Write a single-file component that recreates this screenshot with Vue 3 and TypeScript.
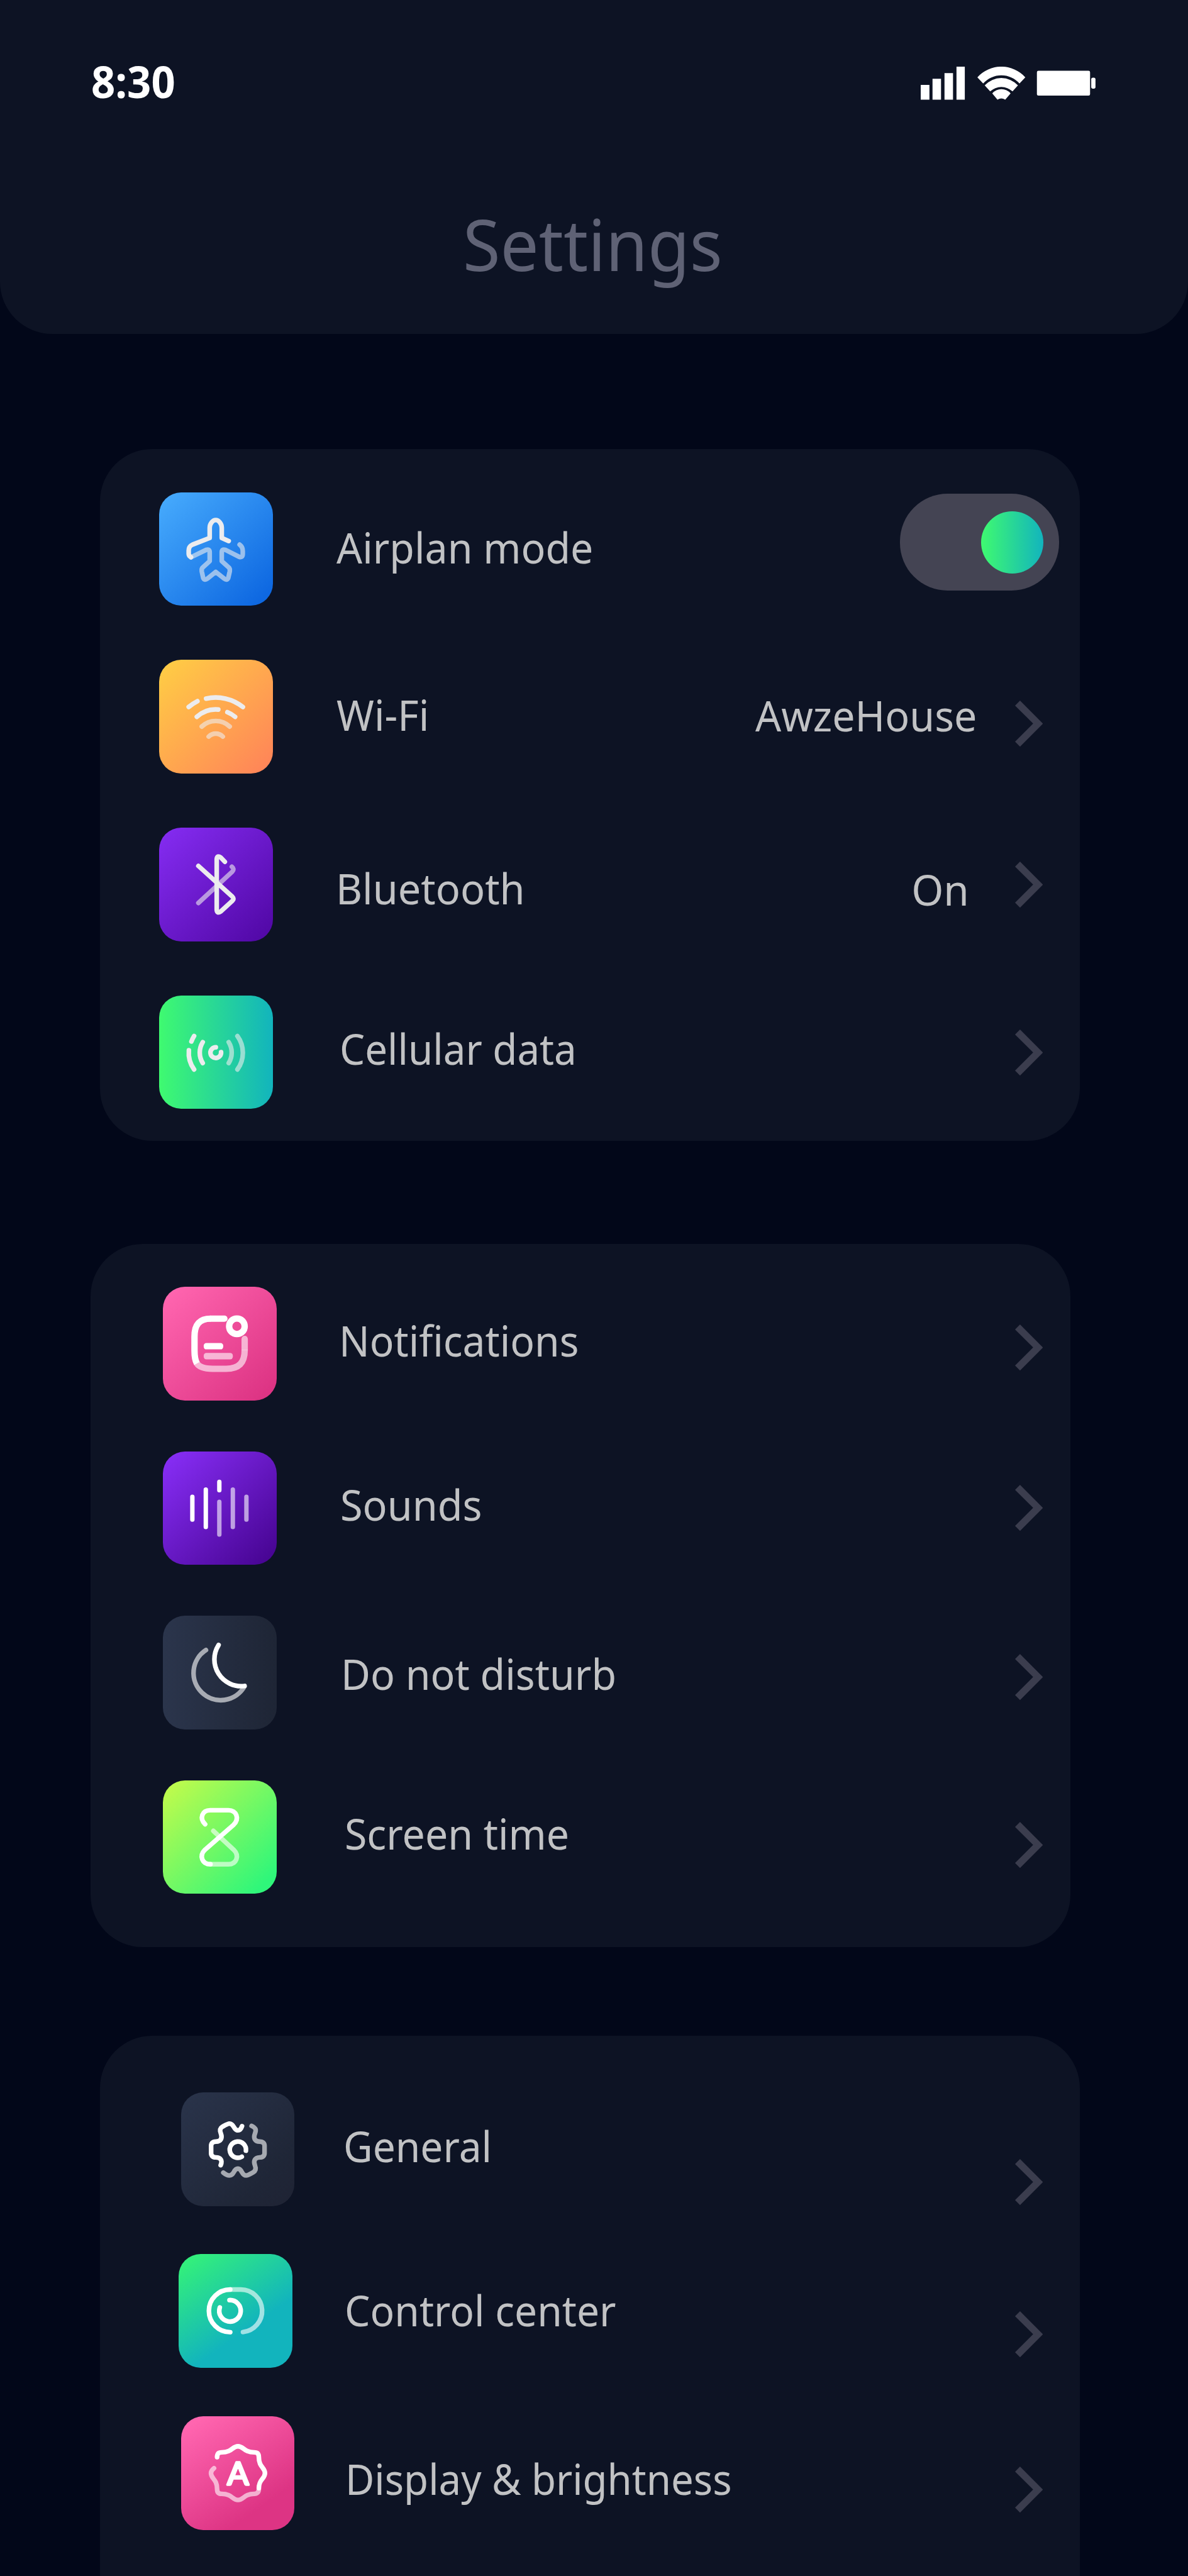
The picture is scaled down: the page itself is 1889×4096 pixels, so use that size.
<script setup lang="ts">
import { ref } from 'vue'

interface Row {
  id: string
  label: string
  x: number
  y: number
  stretch: number
  shift?: number
  chevron?: number
  value?: string
  valueGap?: number
  valueY?: number
  valueStretch?: number
}

interface Group {
  id: string
  rows: Row[]
}

const airplane = ref(true)

const groups: Group[] = [
  {
    id: 'network',
    rows: [
      { id: 'airplane', label: 'Airplan mode', x: 108.8, y: -3.2, stretch: 0.95 },
      { id: 'wifi', label: 'Wi-Fi', x: 109.6, y: -4, stretch: 0.95, chevron: 70.4, value: 'AwzeHouse', valueGap: 65.5, valueY: -2.5, valueStretch: 0.9516 },
      { id: 'bluetooth', label: 'Bluetooth', x: 108.6, y: 6.9, stretch: 0.9556, chevron: 58.6, value: 'On', valueGap: 79, valueY: 8.5, valueStretch: 0.967 },
      { id: 'cellular', label: 'Cellular data', x: 115.2, y: -6.3, stretch: 0.939, chevron: 58.8 },
    ],
  },
  {
    id: 'alerts',
    rows: [
      { id: 'notifications', label: 'Notifications', x: 107.8, y: -5.9, stretch: 0.946, chevron: 65.2 },
      { id: 'sounds', label: 'Sounds', x: 110, y: -6.3, stretch: 0.955, chevron: 58.4 },
      { id: 'dnd', label: 'Do not disturb', x: 110.9, y: 1.6, stretch: 0.9506, chevron: 66.2 },
      { id: 'screentime', label: 'Screen time', x: 117, y: -5.7, stretch: 0.95, chevron: 71.8 },
    ],
  },
  {
    id: 'system',
    rows: [
      { id: 'general', label: 'General', x: 83.7, y: -5.3, stretch: 0.945, chevron: 114.8 },
      { id: 'control', label: 'Control center', x: 90.2, y: -1.1, stretch: 0.9457, shift: -3.8, chevron: 98.2 },
      { id: 'display', label: 'Display & brightness', x: 87.3, y: 10.2, stretch: 0.9364, chevron: 87 },
    ],
  },
]
</script>

<template>
  <div class="screen">
    <header class="header">
      <div class="status">
        <span class="time">8:30</span>
        <svg class="indicators" viewBox="144 75 904 171" fill="#fff">
          <path d="M144 169h45v77h-45zM205 138h44v108h-44zM267 108h44v138h-44zM329 75h43v171h-43z" />
          <path d="M437 130A167 167 0 0 1 685 130L655 162A126 126 0 0 0 467 162Z" />
          <path d="M475 172A116 116 0 0 1 647 172L619 203A85 85 0 0 0 503 203Z" />
          <path d="M514 213A63 63 0 0 1 609 213L581 246Q561 232 541 246Z" />
          <rect x="745" y="96" width="275" height="129" rx="8" />
          <rect x="1026" y="132" width="22" height="57" rx="9" />
        </svg>
      </div>
      <h1 class="title">Settings</h1>
    </header>

    <main class="groups">
      <section v-for="g in groups" :key="g.id" class="card" :class="g.id">
        <div v-for="r in g.rows" :key="r.id" class="row">
          <div class="tile" :class="r.id" :style="{ marginLeft: (r.shift ?? 0) + 'px' }">
            <svg viewBox="0 0 196 196" class="glyph">
              <template v-if="r.id === 'airplane'">
                <path class="dim" d="M55 111.7L81 99Q87.2 97 87.2 103V118.5L75 129.5Q73 131.5 73.5 136L76 147.5Q78.5 152.5 83.5 148.5L97.6 137L112 148.5Q117 152.5 119.2 147.5L121.8 136Q122.3 131.5 120.3 129.5L108 118.5V103Q108 97 114.2 99L138 111Q144.2 113 144.2 106V101Q144.2 94 138.8 90" />
                <path d="M120 83.8L108 78.5V61C108 54 103 47.6 97.6 47.6S87.2 54 87.2 61V78.5L57.5 90Q51 93 51 100V106Q51 109.5 55 111.7" />
              </template>
              <template v-else-if="r.id === 'wifi'">
                <path d="M51 81.5A75 75 0 0 1 66 71.5M81 67A75 75 0 0 1 144.4 81.5M65 98.4A48.5 48.5 0 0 1 102 85.9M117.7 90.4A48.5 48.5 0 0 1 131 98.4" />
                <path class="dim" d="M73.5 115.2A35 35 0 0 1 121.7 115.2M85.5 132.5A17 17 0 0 1 109.8 132.5" />
              </template>
              <template v-else-if="r.id === 'bluetooth'">
                <path class="dim" d="M125.4 67.4Q130.5 71.5 126 76L67.7 129.8" />
                <path d="M67.7 66L126.3 119Q130 122.7 126.3 126.2L106.3 144.5Q100 149 99.3 142V54Q100 47 106.3 51.5L113.3 58.8" />
              </template>
              <template v-else-if="r.id === 'cellular'">
                <path class="dim" d="M120 80.4A34 34 0 0 1 120 116.3M135 69.8A49 49 0 0 1 135 127.4" />
                <path d="M60.3 69.8A49 49 0 0 0 55.7 79.2M51.3 94.3A49 49 0 0 0 60.3 127.4M75.2 80.4A34 34 0 0 0 75.2 116.3M97.8 89.2A9.2 9.2 0 1 0 106.8 97.4" />
              </template>
              <template v-else-if="r.id === 'notifications'">
                <path class="badge dim butt" d="M58.2 131.5Q64 141.5 85.7 141.5H109C132 141.5 141 130 141 109.5V109" />
                <path class="badge dim tip" d="M135.5 109.5V90A5.5 5.5 0 0 1 146.5 90V109.5Z" />
                <path class="badge butt" d="M82.6 55C62 55 54.5 66 54.5 86V110Q54.5 125 58.7 132.4" />
                <path class="badge" d="M82.6 55H106" />
                <circle class="badge" cx="127.6" cy="68.2" r="13.4" />
                <rect class="fill" x="70.4" y="97" width="33.6" height="11" rx="4.5" />
                <rect class="fill faint" x="70.4" y="114.2" width="50.2" height="11" rx="4.5" />
              </template>
              <template v-else-if="r.id === 'sounds'">
                <path class="thin dim" d="M97.3 86.8V143M120.6 65.5V130.2M144 78V117.3" />
                <path class="thin" d="M50.8 78V117.3M74 65.5V130.2M97.3 52.4V66.6" />
              </template>
              <template v-else-if="r.id === 'dnd'">
                <path class="dim" d="M74.3 59.3A47 47 0 1 0 140.4 122.5" />
                <path d="M96 50.6A46.2 46.2 0 0 0 140.8 121.2" />
              </template>
              <template v-else-if="r.id === 'screentime'">
                <path class="dim" d="M87 87L122 119.5C132.5 130 127 144.5 113 144.5H82" />
                <path d="M72.8 75.5C62.5 65.5 67.5 51.4 81.5 51.4H113C127 51.4 132.5 66 122 76.4L72.6 119.5C62 130 67.5 144.5 82 144.5" />
              </template>
              <template v-else-if="r.id === 'general'">
                <path class="dim" d="M121.5 57.8C130 62 129.3 65.5 127.3 71C124.2 79 127 84.8 135.5 84.9C141.5 85 143.8 88 143.8 92V105C143.8 109 141.5 112 135.5 112.1C127 112.2 124.2 118 127.3 126C129.3 131 129 135 124 138C119.5 140.5 115 143.2 112.2 143.2C103.5 143.2 105.5 131.5 97.8 131.5C90 131.5 92 143.2 83.3 143.2C79 143.2 76 141 72.7 138.3" />
                <path d="M105 58.2C103.5 63 101 65.5 97.8 65.5C90 65.5 92 53.8 83.3 53.8C80.5 53.8 76 56.5 71.5 59C66.5 62 66.5 66 68.5 71C71.5 79 68.5 84.8 60 84.9C54 85 51.7 88 51.7 92V105C51.7 109 54 112 60 112.1C68 112.2 71.8 117 68.2 125.5" />
                <path d="M104.6 111A14 14 0 1 1 111.7 100.5" />
              </template>
              <template v-else-if="r.id === 'control'">
                <path class="dim" d="M89 61.2H107.3A36.8 36.8 0 0 1 111 134.6" />
                <path d="M89 61.2A36.8 36.8 0 0 0 89 134.8M87.7 79.5A18.5 18.5 0 1 1 71 92.2" />
              </template>
              <template v-else>
                <path class="dim" d="M56.7 89.5C53.5 92 51.5 95 51.5 98C51.5 108 62 108 62 125.5C62 131 64.5 133.8 70 133.8C88 133.8 88 144.3 98 144.3S108 133.8 126 133.8C131 133.8 134 131 134 125.5" />
                <path d="M62 70.6C62 64.5 64.5 62.2 70 62.2C88 62.2 88 51.7 98 51.7S108 62.2 126 62.2C131.5 62.2 134 65 134 70.5C134 88 144.5 88 144.5 98S134 108 134 124" />
                <text class="letter" x="98" y="118" text-anchor="middle">A</text>
              </template>
            </svg>
          </div>

          <span
            class="label"
            :style="{ marginLeft: r.x + 'px', marginTop: r.y + 'px', transform: `scaleX(${r.stretch})` }"
          >{{ r.label }}</span>

          <button
            v-if="r.id === 'airplane'"
            class="toggle"
            :class="{ on: airplane }"
            role="switch"
            :aria-checked="airplane"
            aria-label="Airplane mode"
            @click="airplane = !airplane"
          >
            <span class="knob" />
          </button>
          <div v-else class="trail">
            <span
              v-if="r.value"
              class="label value"
              :style="{ marginRight: r.valueGap + 'px', marginTop: r.valueY + 'px', transform: `scaleX(${r.valueStretch})` }"
            >{{ r.value }}</span>
            <svg class="chevron" viewBox="0 0 48 79.4" :style="{ marginTop: r.chevron + 'px' }">
              <path d="M8.6 0L48 39.7L8.6 79.4L0 70.8L31.2 39.7L0 8.6Z" />
            </svg>
          </div>
        </div>
      </section>
    </main>
  </div>
</template>

<style>
body {
  margin: 0;
  background: #020719;
}
</style>

<style scoped>
.screen {
  zoom: 0.92236;
  width: 2048px;
  height: 4440.8px;
  overflow: hidden;
  background: #020719;
  color: #c1c2c4;
  font-family: "Noto Sans", "Open Sans", sans-serif;
}

.header {
  box-sizing: border-box;
  height: 576px;
  padding-top: 86px;
  background: #0d1324;
  border-radius: 0 0 90px 90px;
}

.status {
  display: flex;
  justify-content: space-between;
  align-items: flex-start;
  height: 110px;
  padding: 0 159px 0 157px;
}

.time {
  color: #fff;
  font-size: 75px;
  font-weight: 700;
  line-height: 110px;
  transform: scaleX(0.968);
  transform-origin: left;
}

.indicators {
  width: 301.3px;
  height: 57px;
  margin-top: 29px;
}

.title {
  width: max-content;
  margin: 129px 0 0 798px;
  color: #5f6275;
  font-size: 122px;
  font-weight: 400;
  line-height: 190px;
  transform: scaleX(0.964);
  transform-origin: left;
}

.groups {
  display: flex;
  flex-direction: column;
}

.card {
  display: flex;
  flex-direction: column;
  box-sizing: border-box;
  flex: none;
  width: 1689.4px;
  background: #0d1324;
  border-radius: 90px;
}

.network {
  height: 1192.6px;
  margin: 198px 0 0 172.6px;
  padding: 74.4px 64px 0 102.2px;
  gap: 93.2px;
}

.alerts {
  height: 1212px;
  margin: 177.6px 0 0 156px;
  padding: 74.2px 47.4px 0 124.8px;
  gap: 87.5px;
}

.system {
  height: 1100px;
  margin: 153.6px 0 0 172.6px;
  padding: 97.2px 64px 0 139.2px;
  gap: 83.2px;
}

.row {
  display: flex;
  align-items: flex-start;
  height: 196px;
}

.tile {
  flex: none;
  width: 196px;
  height: 196px;
  border-radius: 38px;
}

.tile.airplane { background: linear-gradient(135deg, #45a9fc 5%, #0e68e1 92%); }
.tile.wifi { background: linear-gradient(135deg, #ffcb45 5%, #ff8558 95%); }
.tile.bluetooth { background: linear-gradient(135deg, #832bef 5%, #5007a4 98%); }
.tile.cellular { background: linear-gradient(90deg, #3ffa70, #12b4bd); }
.tile.notifications { background: linear-gradient(135deg, #ff65af 5%, #dd3484 92%); }
.tile.sounds { background: linear-gradient(135deg, #862df4 5%, #45038f 98%); }
.tile.dnd { background: linear-gradient(90deg, #2b354c, #1e2535); }
.tile.screentime { background: linear-gradient(135deg, #bffb4c 5%, #2ff67a 90%); }
.tile.general { background: linear-gradient(135deg, #2a344b, #1f2637 75%, #1f2334); }
.tile.control { background: linear-gradient(145deg, #32ee7d 8%, #12b4bd 64%); }
.tile.display { background: linear-gradient(145deg, #ff65af 8%, #dd3484 76%); }

.glyph {
  display: block;
  width: 196px;
  height: 196px;
  fill: none;
  stroke: #fff;
  stroke-width: 8;
  stroke-linecap: round;
  stroke-linejoin: round;
}

.network .glyph { stroke: #ececee; }
.glyph .dim { stroke-opacity: 0.6; }
.glyph .thin { stroke-width: 7.6; }
.glyph .badge { stroke-width: 11; }
.glyph .butt { stroke-linecap: butt; }
.glyph .tip { fill: #fff; fill-opacity: 0.6; stroke: none; }
.glyph .fill { fill: #fff; stroke: none; }
.glyph .faint { fill-opacity: 0.6; }

.letter {
  fill: #fff;
  stroke: #fff;
  stroke-width: 3.8;
  font: 400 55px Lato, sans-serif;
}

.label {
  flex: none;
  font-size: 73.5px;
  line-height: 196px;
  white-space: nowrap;
  transform-origin: left;
}

.value {
  transform-origin: right;
}

.trail {
  display: flex;
  align-items: flex-start;
  margin-left: auto;
}

.chevron {
  flex: none;
  width: 48px;
  height: 79.4px;
  fill: #3b3d4e;
}

.toggle {
  display: flex;
  align-items: center;
  box-sizing: border-box;
  width: 274.4px;
  height: 166.6px;
  margin: 2.6px -27.4px 0 auto;
  padding: 0 26.4px 0;
  border: 0;
  border-radius: 82px;
  background: #444453;
}

.toggle.on {
  justify-content: flex-end;
}

.knob {
  width: 107.4px;
  height: 107.4px;
  margin-top: 2px;
  border-radius: 50%;
  background: linear-gradient(90deg, #3ffa70, #12b4bd);
}
</style>
